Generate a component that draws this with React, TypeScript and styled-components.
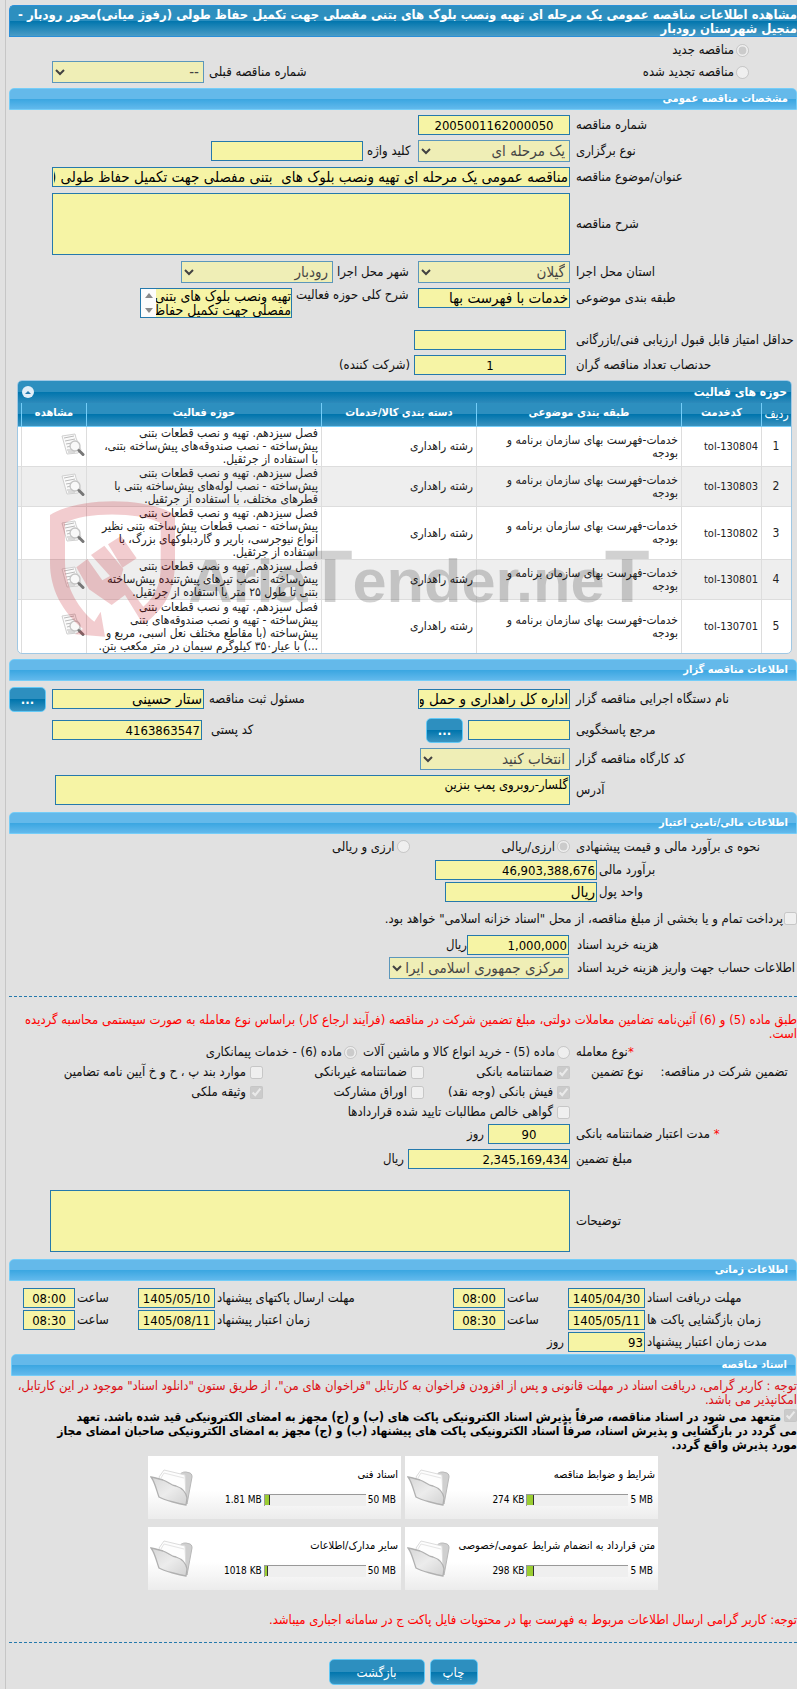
import React from "react";
import styled, { createGlobalStyle } from "styled-components";

const GlobalStyle = createGlobalStyle`
  *, *::before, *::after { box-sizing: border-box; }
  body {
    margin: 0;
    background: #e1e1e1;
    color: #111;
    font-family: "DejaVu Sans Condensed", "DejaVu Sans", sans-serif;
    font-size: 13px;
    line-height: 14px;
  }
  input, select, textarea, button { font-family: inherit; margin: 0; }
`;

const Page = styled.main`
  direction: rtl;
  margin-left: 5px;
  padding: 5px 0 5px 3px;
  border-left: 1px solid #c6c6c6;
  overflow: hidden;
`;

const TitleBar = styled.h1`
  margin: 0;
  height: 32px;
  padding-top: 2px;
  border: 1px solid #2a8fd8;
  border-right: 0;
  border-radius: 5px 0 0 0;
  background: linear-gradient(#2d8fbf 0 50%, #0075ad 50%, #4a9cc6);
  color: #fff;
  font-size: 13px;
  line-height: 14px;
  font-weight: bold;
  white-space: nowrap;
`;

const SectionHead = styled.h2<{ $inset?: boolean }>`
  margin: ${(p) => (p.$inset ? "0 1px 0 2px" : "0")};
  height: 22px;
  padding: 0 8px;
  border: 1px solid #74cdf8;
  border-radius: 5px 5px 0 0;
  background: linear-gradient(#64b9ea 0 50%, #3aa6e1 50%, #62b9ec);
  color: #fff;
  font-size: 11px;
  line-height: 20px;
  font-weight: bold;
`;

const Body = styled.div<{ $pt?: number; $pb?: number; $gap?: number }>`
  display: flex;
  flex-direction: column;
  gap: ${(p) => p.$gap ?? 5}px;
  padding: ${(p) => p.$pt ?? 5}px 0 ${(p) => p.$pb ?? 7}px;
`;

const RowBox = styled.div<{ $w: number; $h: number; $top: boolean }>`
  display: grid;
  grid-template-columns: minmax(0, 1fr) ${(p) => p.$w}px;
  align-items: ${(p) => (p.$top ? "start" : "center")};
  min-height: ${(p) => p.$h}px;
`;

const MainLabel = styled.div`
  display: flex;
  justify-content: flex-end;
  white-space: nowrap;
  line-height: 20px;
`;

const Fields = styled.div<{ $pad: number; $top?: boolean }>`
  display: flex;
  align-items: ${(p) => (p.$top ? "flex-start" : "center")};
  white-space: nowrap;
  padding-right: ${(p) => p.$pad}px;
`;

const AuxLabel = styled.label<{ $w: number; $pad?: number }>`
  display: flex;
  justify-content: flex-end;
  flex: none;
  width: ${(p) => p.$w}px;
  padding-left: ${(p) => p.$pad ?? 4}px;
`;

const Input = styled.input<{ $w: number; $center?: boolean; $fa?: boolean }>`
  flex: none;
  width: ${(p) => p.$w}px;
  height: 20px;
  padding: 0 1px;
  border: 1px solid #2579ac;
  background: #f6f4a5;
  color: #000;
  font-size: ${(p) => (p.$fa ? 15 : 13)}px;
  text-align: ${(p) => (p.$center ? "center" : "right")};
`;

const Select = styled.select<{ $w: number }>`
  flex: none;
  width: ${(p) => p.$w}px;
  height: 22px;
  border: 1px solid #2579ac;
  border-radius: 0;
  background-color: #f6f4a5;
  color: #000;
  font-size: 15px;
  opacity: 0.7;
`;

const TextArea = styled.textarea<{ $w: number; $h: number }>`
  flex: none;
  display: block;
  width: ${(p) => p.$w}px;
  height: ${(p) => p.$h}px;
  padding: 1px;
  border: 1px solid #2579ac;
  background: #f6f4a5;
  color: #000;
  font-size: 13px;
  line-height: 15px;
  resize: none;
  overflow: hidden;
`;

const ScrollBox = styled.div`
  display: flex;
  width: 152px;
  height: 30px;
  border: 1px solid #2579ac;
  background: #f6f4a5;

  textarea {
    flex: 1;
    width: 0;
    height: 28px;
    border: 0;
    padding: 0;
    font-size: 14px;
    line-height: 14px;
    white-space: pre;
  }
`;

const ScrollRail = styled.div`
  width: 15px;
  display: flex;
  flex-direction: column;
  justify-content: space-between;
  align-items: center;
  padding: 4px 0;
  background: #fcfcfc;
`;

const Choice = styled.label<{ $gap?: number }>`
  display: flex;
  align-items: center;
  gap: ${(p) => p.$gap ?? 2}px;
  white-space: nowrap;

  input { flex: none; width: 13px; height: 13px; }
`;

const ChoiceLine = styled.div`
  display: flex;
  gap: 6px;
`;

const Checks = styled.div`
  display: grid;
  grid-template-columns: 146px 161px auto;
  grid-auto-rows: 20px;
  align-items: center;
`;

const Wide = styled.span`
  grid-column: 1 / -1;
`;

const LabelPair = styled.div`
  display: flex;
  gap: 17px;
  justify-content: flex-end;
  padding-left: 15px;
  line-height: 20px;
  white-space: nowrap;
`;

const Red = styled.span`
  color: #f00;
`;

const BlueButton = styled.button<{ $w: number }>`
  flex: none;
  width: ${(p) => p.$w}px;
  height: 26px;
  padding: 0;
  border: 1px solid #63c8f5;
  border-radius: 5px;
  background: linear-gradient(#2d8fbf 0 50%, #0075ad 50%, #3a95c2);
  color: #fff;
  font-size: 13px;
`;

const DotsButton = styled(BlueButton)`
  height: 25px;
  font-weight: bold;
`;

const Gap = styled.span<{ $w: number }>`
  flex: none;
  width: ${(p) => p.$w}px;
`;

const Spring = styled.span`
  flex: 1;
`;

const Divider = styled.hr`
  margin: 0;
  border: 0;
  border-top: 1px dashed #2579ac;
`;

const Note = styled.p<{ $color?: string; $m?: string }>`
  margin: ${(p) => p.$m ?? "0"};
  color: ${(p) => p.$color ?? "#f00"};
  line-height: 14px;
  white-space: nowrap;
`;

const Pledge = styled.label`
  display: block;
  font-size: 12px;
  line-height: 14px;
  font-weight: bold;
  color: #000;
  white-space: nowrap;
  margin-top: 2px;

  input { width: 13px; height: 13px; margin-left: 3px; vertical-align: -1px; }
`;

/* activity table */

const Panel = styled.section`
  position: relative;
  margin: 0 5px 5px 8px;
  border: 1px solid #a0c8e4;
  border-radius: 5px;
  background: #fff;
`;

const PanelHead = styled.header`
  display: flex;
  justify-content: space-between;
  align-items: center;
  height: 22px;
  padding: 0 4px;
  border-radius: 4px 4px 0 0;
  background: linear-gradient(#2d8fbf 0 50%, #0075ad 50%, #2d8abb);
  color: #fff;

  h3 { margin: 0; font-size: 12px; }
`;

const Collapse = styled.button`
  width: 12px;
  height: 12px;
  padding: 0;
  border: 0;
  border-radius: 6px;
  background: #e2eef8;
  display: grid;
  place-items: center;
`;

const Table = styled.table`
  width: 100%;
  table-layout: fixed;
  border-collapse: separate;
  border-spacing: 0;
  font-size: 12px;
  line-height: 13px;

  th {
    height: 24px;
    padding: 0 0 4px;
    background: linear-gradient(#2d8fbf 0 50%, #0075ad 50%, #3a92bf);
    border-left: 1px solid #74cdf8;
    border-bottom: 1px solid #74cdf8;
    color: #fff;
    font-size: 11px;
    white-space: nowrap;
  }
  th:first-child { font-size: 12px; font-weight: normal; padding: 0; }
  th:last-child, td:last-child { border-left: 0; }
  td {
    padding: 0 3px 0 2px;
    border-left: 1px solid #ddd;
    border-bottom: 1px solid #ddd;
    color: #222;
  }
  td:first-child { text-align: center; }
  td:nth-child(2) { font-size: 11px; }
  td:nth-child(6) { padding-right: 1px; }
  tbody tr:nth-child(even) td { background: #eee; }
  tbody tr:last-child td { border-bottom: 0; }
`;

const TallRow = styled.tr<{ $h: number }>`
  height: ${(p) => p.$h}px;
`;

const CellLine = styled.div`
  white-space: nowrap;
`;

const Watermark = styled.svg`
  position: absolute;
  left: -3px;
  top: 114px;
  width: 640px;
  height: 145px;
  pointer-events: none;
  direction: ltr;
`;

/* document cards */

const Cards = styled.div`
  display: grid;
  grid-template-columns: 253px 253px;
  gap: 8px 4px;
  justify-content: center;
  margin-top: 4px;
`;

const Card = styled.article`
  display: flex;
  align-items: center;
  justify-content: space-between;
  height: 63px;
  padding: 0 3px 0 2px;
  background: linear-gradient(#fff 55%, #ececec);
  color: #000;
  font-size: 10px;

  h4 { margin: 0 0 11px; font-size: 11px; line-height: 14px; font-weight: normal; white-space: nowrap; }
`;

const Usage = styled.div`
  display: flex;
  align-items: center;
  gap: 2px;
  padding-right: 2px;
  white-space: nowrap;
`;

const Track = styled.div`
  width: 102px;
  height: 12px;
  direction: ltr;
  border-top: 1px solid #999;
  border-left: 1px solid #999;
  background: #efefef;
`;

const Fill = styled.div`
  height: 10px;
  background: #9acd32;
  border-right: 1px solid #333;
`;

const Actions = styled.div`
  display: flex;
  justify-content: center;
  gap: 5px;
  margin-top: 16px;
`;

type RowProps = {
  id?: string;
  label: React.ReactNode;
  w?: number;
  pad?: number;
  h?: number;
  children: React.ReactNode;
};

function Row({ id, label, w = 567, pad = 6, h = 20, children }: RowProps) {
  return (
    <RowBox $w={w} $h={h} $top={false}>
      <MainLabel>{id ? <label htmlFor={id}>{label}</label> : label}</MainLabel>
      <Fields $pad={pad}>{children}</Fields>
    </RowBox>
  );
}

function Check({ text, on, gap = 4 }: { text: string; on?: boolean; gap?: number }) {
  return (
    <Choice $gap={gap}>
      <input type="checkbox" disabled defaultChecked={on} />
      {text}
    </Choice>
  );
}

function Radio({ name, text, on }: { name: string; text: string; on?: boolean }) {
  return (
    <Choice>
      <input type="radio" name={name} disabled defaultChecked={on} />
      {text}
    </Choice>
  );
}

function ViewIcon() {
  return (
    <svg width="24" height="24" viewBox="0 0 24 24" aria-hidden="true">
      <path d="M1 3 L14 1 L15 5 L20 17 L17 20 L6 21 Z" fill="#fafafa" stroke="#d0d0d0" strokeWidth="1" />
      <path d="M3 5 L13 3 M4 8 L14 6 M5 11 L11 10 M6 14 L10 13 M6 17 L12 17 M7 19 L14 19" stroke="#bbb" strokeWidth="1" />
      <circle cx="14" cy="13" r="5" fill="#f8f8f8" fillOpacity="0.85" stroke="#c4c4c4" strokeWidth="1.3" />
      <path d="M18 17.5 L22 21.5" stroke="#777" strokeWidth="3" strokeLinecap="round" />
    </svg>
  );
}

function FolderIcon() {
  return (
    <svg width="44" height="40" viewBox="0 0 44 40" aria-hidden="true">
      <defs>
        <linearGradient id="folderFront" x1="0" y1="0" x2="1" y2="1">
          <stop offset="0" stopColor="#d6d6d6" />
          <stop offset="0.5" stopColor="#ececec" />
          <stop offset="1" stopColor="#d2d2d2" />
        </linearGradient>
      </defs>
      <path d="M29 8 C31 4 34 4 36 4 L40 5 C42 6 42 8 42 9 L37 36 L34 30 Z" fill="#cfcfcf" stroke="#b8b8b8" />
      <path d="M9 9 L14 2 L35 7 L36 30 L12 20 Z" fill="#fdfdfd" stroke="#dcdcdc" />
      <path d="M11 10 L14 5 L34 10" fill="none" stroke="#e4e4e4" />
      <path d="M1 9 C6 10 9 11 13 12 C19 14 20 17 26 18 C32 20 36 24 37 30 L36 37 C30 36 14 32 9 29 C7 24 5 14 1 9 Z" fill="url(#folderFront)" stroke="#b0b0b0" strokeWidth="1.3" />
    </svg>
  );
}

const activities = [
  { code: "tol-130804", h: 40, lines: ["فصل سیزدهم. تهیه و نصب قطعات بتنی", "پیش‌ساخته - نصب صندوقه‌های پیش‌ساخته بتنی،", "با استفاده از جرثقیل."] },
  { code: "tol-130803", h: 40, lines: ["فصل سیزدهم. تهیه و نصب قطعات بتنی", "پیش‌ساخته - نصب لوله‌های پیش‌ساخته بتنی  با", "قطرهای مختلف، با استفاده از جرثقیل."] },
  { code: "tol-130802", h: 53, lines: ["فصل سیزدهم. تهیه و نصب قطعات بتنی", "پیش‌ساخته - نصب قطعات پیش‌ساخته بتنی نظیر", "انواع نیوجرسی، باریر و گاردبلوکهای بزرگ، با", "استفاده از جرثقیل."] },
  { code: "tol-130801", h: 40, lines: ["فصل سیزدهم. تهیه و نصب قطعات بتنی", "پیش‌ساخته - نصب تیرهای پیش‌تنیده پیش‌ساخته", "بتنی تا طول ۲۵ متر با استفاده از جرثقیل."] },
  { code: "tol-130701", h: 53, lines: ["فصل سیزدهم. تهیه و نصب قطعات بتنی", "پیش‌ساخته - تهیه و نصب صندوقه‌های  بتنی", "پیش‌ساخته (با مقاطع مختلف نعل اسبی، مربع و", "...) با عیار۳۵۰ کیلوگرم سیمان در متر مکعب بتن."] },
];

const documents = [
  { title: "شرایط و ضوابط مناقصه", max: "5 MB", used: "274 KB", fill: 7 },
  { title: "اسناد فنی", max: "50 MB", used: "1.81 MB", fill: 5 },
  { title: "متن قرارداد به انضمام شرایط عمومی/خصوصی", max: "5 MB", used: "298 KB", fill: 7 },
  { title: "سایر مدارک/اطلاعات", max: "50 MB", used: "1018 KB", fill: 3 },
];

function ActivityTable() {
  return (
    <Panel>
      <PanelHead>
        <h3>حوزه های فعالیت</h3>
        <Collapse aria-label="بستن">
          <svg width="6" height="3" viewBox="0 0 6 3"><path d="M3 0 L6 3 H0 Z" fill="#2579ac" /></svg>
        </Collapse>
      </PanelHead>
      <Table>
        <colgroup>
          <col width="30" />
          <col width="80" />
          <col />
          <col width="155" />
          <col width="235" />
          <col width="65" />
          <col width="3" />
        </colgroup>
        <thead>
          <tr>
            <th>ردیف</th>
            <th>کدخدمت</th>
            <th>طبقه بندی موضوعی</th>
            <th>دسته بندی کالا/خدمات</th>
            <th>حوزه فعالیت</th>
            <th>مشاهده</th>
            <th />
          </tr>
        </thead>
        <tbody>
          {activities.map((a, i) => (
            <TallRow key={a.code} $h={a.h}>
              <td>{i + 1}</td>
              <td><bdi>{a.code}</bdi></td>
              <td>خدمات-فهرست بهای سازمان برنامه و<br />بودجه</td>
              <td>رشته راهداری</td>
              <td>{a.lines.map((l) => <CellLine key={l}>{l}</CellLine>)}</td>
              <td><ViewIcon /></td>
              <td />
            </TallRow>
          ))}
        </tbody>
      </Table>
      <Watermark viewBox="0 0 1920 435" aria-hidden="true">
        <path
          fill="#c00010"
          fillOpacity="0.2"
          fillRule="evenodd"
          d="M105 60 C190 5 400 5 480 60 V205 C478 290 450 340 387 388 L384 388 L330 300 L290 330 L222 283 L184 217 L217 192 L262 256 L285 243 L228 180 L268 152 L325 222 L318 246 L385 335 C425 300 437 260 437 215 V84 C370 50 210 50 150 84 V200 C150 280 195 345 238 380 L257 350 L270 425 L180 418 L204 402 C140 350 105 280 105 205 Z M279 148 L318 123 L365 190 L322 218 Z"
        />
        <text x="520" y="321" fontFamily="Liberation Sans, sans-serif" fontWeight="bold" fontSize="184" fill="#000" fillOpacity="0.18">
          Aria<tspan fontSize="220">T</tspan>ender.ne<tspan fontSize="220">T</tspan>
        </text>
      </Watermark>
    </Panel>
  );
}

export default function App() {
  return (
    <>
      <GlobalStyle />
      <Page lang="fa">
        <TitleBar>
          مشاهده اطلاعات مناقصه عمومی یک مرحله ای تهیه ونصب بلوک های بتنی مفصلی جهت تکمیل حفاظ طولی (رفوژ میانی)محور رودبار -
          <br />
          منجیل شهرستان رودبار
        </TitleBar>

        <Body $pt={4} $pb={5} $gap={2}>
          <Row w={740} pad={0} h={18} label="">
            <Radio name="kind" text="مناقصه جدید" on />
          </Row>
          <Row w={740} pad={0} h={22} label="">
            <Radio name="kind" text="مناقصه تجدید شده" />
            <Spring />
            <AuxLabel htmlFor="prev" $w={120} $pad={5}>شماره مناقصه قبلی</AuxLabel>
            <Select id="prev" $w={152} disabled><option>--</option></Select>
            <Gap $w={43} />
          </Row>
        </Body>

        <SectionHead>مشخصات مناقصه عمومی</SectionHead>
        <Body $pb={5}>
          <Row id="no" label="شماره مناقصه">
            <Input id="no" $w={152} $center readOnly value="2005001162000050" />
          </Row>
          <Row id="type" h={22} label="نوع برگزاری">
            <Select id="type" $w={152} disabled><option>یک مرحله ای</option></Select>
            <AuxLabel htmlFor="key" $w={55}>کلید واژه</AuxLabel>
            <Input id="key" $w={152} readOnly value="" />
          </Row>
          <Row id="subject" label="عنوان/موضوع مناقصه">
            <Input id="subject" $fa $w={518} readOnly value="مناقصه عمومی یک مرحله ای تهیه ونصب بلوک های  بتنی مفصلی جهت تکمیل حفاظ طولی (رفوژ میانی)محور رودبار - منجیل" />
          </Row>
          <Row id="desc" h={64} label="شرح مناقصه">
            <TextArea id="desc" $w={518} $h={62} readOnly />
          </Row>
          <Row id="province" h={22} label="استان محل اجرا">
            <Select id="province" $w={152} disabled><option>گیلان</option></Select>
            <AuxLabel htmlFor="city" $w={85}>شهر محل اجرا</AuxLabel>
            <Select id="city" $w={152} disabled><option>رودبار</option></Select>
          </Row>
          <RowBox $w={567} $h={37} $top>
            <MainLabel><label htmlFor="class">طبقه بندی موضوعی</label></MainLabel>
            <Fields $pad={6} $top>
              <Input id="class" $fa $w={152} readOnly value="خدمات با فهرست بها" />
              <AuxLabel htmlFor="scope" $w={126}>شرح کلی حوزه فعالیت</AuxLabel>
              <ScrollBox>
                <TextArea id="scope" $w={136} $h={28} readOnly value={"تهیه ونصب بلوک های بتنی\nمفصلی جهت تکمیل حفاظ"} />
                <ScrollRail>
                  <svg width="8" height="5" viewBox="0 0 8 5"><path d="M4 0 L8 5 H0 Z" fill="#8a8a8a" /></svg>
                  <svg width="8" height="5" viewBox="0 0 8 5"><path d="M4 5 L8 0 H0 Z" fill="#8a8a8a" /></svg>
                </ScrollRail>
              </ScrollBox>
            </Fields>
          </RowBox>
          <Row id="score" pad={10} label="حداقل امتیاز قابل قبول ارزیابی فنی/بازرگانی">
            <Input id="score" $w={152} readOnly value="" />
          </Row>
          <Row id="quorum" pad={10} label="حدنصاب تعداد مناقصه گران">
            <Input id="quorum" $w={152} $center readOnly value="1" />
            <Gap $w={4} />(شرکت کننده)
          </Row>
        </Body>

        <ActivityTable />

        <SectionHead>اطلاعات مناقصه گزار</SectionHead>
        <Body>
          <Row id="org" h={26} label="نام دستگاه اجرایی مناقصه گزار">
            <Input id="org" $fa $w={152} readOnly value="اداره کل راهداری و حمل و نقل جاده ای استان گیلان" />
            <AuxLabel htmlFor="owner" $w={214} $pad={5}>مسئول ثبت مناقصه</AuxLabel>
            <Input id="owner" $fa $w={152} readOnly value="ستار حسینی" />
            <Gap $w={6} />
            <DotsButton $w={37}>...</DotsButton>
          </Row>
          <Row id="reply" h={26} label="مرجع پاسخگویی">
            <Input id="reply" $w={102} readOnly value="" />
            <Gap $w={5} />
            <DotsButton $w={37}>...</DotsButton>
            <AuxLabel htmlFor="post" $w={224} $pad={9}>کد پستی</AuxLabel>
            <Input id="post" $w={150} readOnly value="4163863547" />
          </Row>
          <Row id="site" h={22} label="کد کارگاه مناقصه گزار">
            <Select id="site" $w={150} disabled><option>انتخاب کنید</option></Select>
          </Row>
          <Row id="addr" h={30} label="آدرس">
            <TextArea id="addr" $w={515} $h={30} readOnly value="گلسار-روبروی پمپ بنزین" />
          </Row>
        </Body>

        <SectionHead>اطلاعات مالی/تامین اعتبار</SectionHead>
        <Body $pt={1} $pb={17} $gap={2}>
          <Row h={23} label="نحوه ی برآورد مالی و قیمت پیشنهادی">
            <Radio name="cur" text="ارزی/ریالی" on />
            <Gap $w={92} />
            <Radio name="cur" text="ارزی و ریالی" />
          </Row>
          <Row id="estimate" w={590} pad={2} label="برآورد مالی">
            <Input id="estimate" $w={162} readOnly value="46,903,388,676" />
          </Row>
          <Row id="unit" w={590} pad={2} label="واحد پول">
            <Input id="unit" $fa $w={152} readOnly value="ریال" />
          </Row>
          <Row w={788} pad={0} h={29} label="">
            <Check gap={1} text={'پرداخت تمام و یا بخشی از مبلغ مناقصه، از محل "اسناد خزانه اسلامی" خواهد بود.'} />
          </Row>
          <Row id="fee" w={568} pad={8} label="هزینه خرید اسناد">
            <Input id="fee" $w={102} readOnly value="1,000,000" />ریال
          </Row>
          <Row id="account" w={568} pad={8} h={22} label="اطلاعات حساب جهت واریز هزینه خرید اسناد">
            <Select id="account" $w={180} disabled><option>مرکزی جمهوری اسلامی ایران، شعبه مرکزی</option></Select>
          </Row>
        </Body>

        <Divider />
        <Note $m="16px 0 1px">
          طبق ماده (5) و (6) آئین‌نامه تضامین معاملات دولتی، مبلغ تضمین شرکت در مناقصه (فرآیند ارجاع کار) براساس نوع معامله به صورت سیستمی محاسبه گردیده
          <br />
          است.
        </Note>

        <Row h={18} label={<><Red>*</Red>نوع معامله</>}>
          <ChoiceLine>
            <Radio name="deal" text="ماده (5) - خرید انواع کالا و ماشین آلات" />
            <Radio name="deal" text="ماده (6) - خدمات پیمانکاری" on />
          </ChoiceLine>
        </Row>
        <RowBox $w={567} $h={60} $top>
          <LabelPair>
            <span>تضمین شرکت در مناقصه:</span>
            <span>نوع تضمین</span>
          </LabelPair>
          <Fields $pad={6}>
            <Checks>
              <Check text="ضمانتنامه بانکی" on />
              <Check text="ضمانتنامه غیربانکی" />
              <Check text="موارد بند پ ، ح و خ آیین نامه تضامین" />
              <Check text="فیش بانکی (وجه نقد)" on />
              <Check text="اوراق مشارکت" />
              <Check text="وثیقه ملکی" on />
              <Wide><Check text="گواهی خالص مطالبات تایید شده قراردادها" /></Wide>
            </Checks>
          </Fields>
        </RowBox>
        <Body $pt={2} $pb={21}>
          <Row id="days" label={<><Red>*</Red> مدت اعتبار ضمانتنامه بانکی</>}>
            <Input id="days" $w={82} $center readOnly value="90" />
            <Gap $w={4} />روز
          </Row>
          <Row id="amount" label="مبلغ تضمین">
            <Input id="amount" $w={162} readOnly value="2,345,169,434" />
            <Gap $w={4} />ریال
          </Row>
        </Body>
        <Body $pt={0}>
          <Row id="notes" h={62} label="توضیحات">
            <TextArea id="notes" $w={520} $h={62} readOnly />
          </Row>
        </Body>

        <SectionHead>اطلاعات زمانی</SectionHead>
        <Body $pt={7} $pb={2} $gap={2}>
          <Row id="d1" w={638} pad={2} label="مهلت دریافت اسناد">
            <Input id="d1" $w={77} $center readOnly value="1405/04/30" />
            <AuxLabel htmlFor="t1" $w={63} $pad={2}>ساعت</AuxLabel>
            <Input id="t1" $w={52} $center readOnly value="08:00" />
            <AuxLabel htmlFor="d2" $w={238} $pad={2}>مهلت ارسال پاکتهای پیشنهاد</AuxLabel>
            <Input id="d2" $w={77} $center readOnly value="1405/05/10" />
            <AuxLabel htmlFor="t2" $w={63} $pad={2}>ساعت</AuxLabel>
            <Input id="t2" $w={52} $center readOnly value="08:00" />
          </Row>
          <Row id="d3" w={638} pad={2} label="زمان بازگشایی پاکت ها">
            <Input id="d3" $w={77} $center readOnly value="1405/05/11" />
            <AuxLabel htmlFor="t3" $w={63} $pad={2}>ساعت</AuxLabel>
            <Input id="t3" $w={52} $center readOnly value="08:30" />
            <AuxLabel htmlFor="d4" $w={238} $pad={2}>زمان اعتبار پیشنهاد</AuxLabel>
            <Input id="d4" $w={77} $center readOnly value="1405/08/11" />
            <AuxLabel htmlFor="t4" $w={63} $pad={2}>ساعت</AuxLabel>
            <Input id="t4" $w={52} $center readOnly value="08:30" />
          </Row>
          <Row id="d5" w={638} pad={2} label="مدت زمان اعتبار پیشنهاد">
            <Input id="d5" $w={77} readOnly value="93" />
            <Gap $w={4} />روز
          </Row>
        </Body>

        <SectionHead $inset>اسناد مناقصه</SectionHead>
        <Note $color="#dc0f14" $m="3px 0 0">
          توجه : کاربر گرامی، دریافت اسناد در مهلت قانونی و پس از افزودن فراخوان به کارتابل "فراخوان های من"، از طریق ستون "دانلود اسناد" موجود در این کارتابل،
          <br />
          امکانپذیر می باشد.
        </Note>
        <Pledge>
          <input type="checkbox" disabled defaultChecked />
          متعهد می شود در اسناد مناقصه، صرفاً پذیرش اسناد الکترونیکی پاکت های (ب) و (ج) مجهز به امضای الکترونیکی قید شده باشد. تعهد
          <br />
          می گردد در بازگشایی و پذیرش اسناد، صرفاً اسناد الکترونیکی پاکت های پیشنهاد (ب) و (ج) مجهز به امضای الکترونیکی صاحبان امضای مجاز
          <br />
          مورد پذیرش واقع گردد.
        </Pledge>

        <Cards>
          {documents.map((d) => (
            <Card key={d.title}>
              <div>
                <h4>{d.title}</h4>
                <Usage>
                  <bdi>{d.max}</bdi>
                  <Track><Fill style={{ width: d.fill }} /></Track>
                  <bdi>{d.used}</bdi>
                </Usage>
              </div>
              <FolderIcon />
            </Card>
          ))}
        </Cards>

        <Note $m="23px 0 15px">
          توجه: کاربر گرامی ارسال اطلاعات مربوط به فهرست بها در محتویات فایل پاکت ج در سامانه اجباری میباشد.
        </Note>
        <Divider />
        <Actions>
          <BlueButton $w={48}>چاپ</BlueButton>
          <BlueButton $w={96}>بازگشت</BlueButton>
        </Actions>
      </Page>
    </>
  );
}
